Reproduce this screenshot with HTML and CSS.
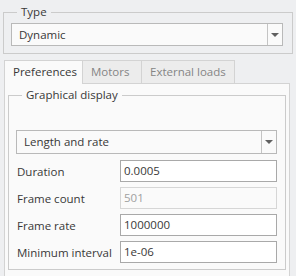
FILE: index.html
```html
<!DOCTYPE html>
<html lang="en">

<head>
    <meta charset="UTF-8">
    <title>Simulation settings</title>
    <link rel="stylesheet" href="styles.css">
</head>

<body>
    <div class="group type-group">
        <span class="legend">Type</span>
        <div class="combo">
            <span class="combo-text">Dynamic</span>
            <span class="combo-btn"><span class="arrow"></span></span>
        </div>
    </div>

    <div class="tabs">
        <div class="tab active">Preferences</div>
        <div class="tab">Motors</div>
        <div class="tab">External loads</div>
    </div>

    <div class="panel">
        <div class="group display-group">
            <span class="legend">Graphical display</span>
            <div class="combo">
                <span class="combo-text">Length and rate</span>
                <span class="combo-btn"><span class="arrow"></span></span>
            </div>
            <div class="rows">
                <div class="row">
                    <label>Duration</label>
                    <div class="field">0.0005</div>
                </div>
                <div class="row">
                    <label>Frame count</label>
                    <div class="field disabled">501</div>
                </div>
                <div class="row">
                    <label>Frame rate</label>
                    <div class="field">1000000</div>
                </div>
                <div class="row">
                    <label>Minimum interval</label>
                    <div class="field">1e-06</div>
                </div>
            </div>
        </div>
    </div>
</body>

</html>
```

FILE: styles.css
```css
* {
    margin: 0;
    padding: 0;
    box-sizing: border-box;
    font-family: 'Open Sans', sans-serif;
}

body {
    background-color: #eeeff1;
    color: #383838;
    font-size: 11.5px;
    width: 296px;
    height: 276px;
    overflow: hidden;
}

.group {
    position: relative;
    border: 1px solid #cbcbcb;
}

.legend {
    position: absolute;
    top: -9px;
    padding: 0 4px;
    line-height: 16px;
}

.type-group {
    margin: 12px 3px 0 3px;
    height: 42px;
    padding: 10px 9px 0 7px;
}

.type-group .legend {
    left: 13px;
    background-color: #eeeff1;
}

.combo {
    display: flex;
    height: 23px;
    background-color: #fafafa;
    border: 1px solid #b9b9b9;
}

.display-group .combo {
    height: 24px;
}

.combo-text {
    flex: 1;
    padding-left: 7px;
    line-height: 21px;
}

.combo-btn {
    width: 15px;
    border-left: 1px solid #c4c4c4;
    display: flex;
    align-items: center;
    justify-content: center;
}

.arrow {
    width: 0;
    height: 0;
    border-left: 4px solid transparent;
    border-right: 4px solid transparent;
    border-top: 4px solid #606060;
}

.tabs {
    display: flex;
    margin: 6px 0 0 4px;
    height: 24px;
}

.tab {
    height: 23px;
    padding: 0 8px;
    line-height: 22px;
    color: #858585;
    background-color: #ececec;
    border: 1px solid #d3d3d3;
    border-bottom: none;
    border-left: none;
}

.tab.active {
    height: 24px;
    color: #383838;
    background-color: #fafafa;
    border-left: 1px solid #d3d3d3;
    position: relative;
    z-index: 1;
    width: 79px;
}

.tab:nth-child(2) {
    width: 59px;
}

.tab:nth-child(3) {
    width: 93px;
}

.panel {
    margin: -1px 6px 0 4px;
    height: 200px;
    background-color: #fafafa;
    border: 1px solid #d3d3d3;
    padding: 11px 3px 0 3px;
}

.display-group {
    height: 175px;
    padding: 34px 8px 0 7px;
}

.display-group .legend {
    left: 13px;
    background-color: #fafafa;
}

.rows {
    display: flex;
    flex-direction: column;
    gap: 5px;
    margin-top: 6px;
}

.row {
    display: flex;
    align-items: center;
    height: 22px;
}

.row label {
    width: 104px;
    padding-left: 1px;
}

.field {
    flex: 1;
    height: 22px;
    line-height: 20px;
    padding-left: 3px;
    background-color: #ffffff;
    border: 1px solid #a9a9a9;
}

.field.disabled {
    color: #a0a0a0;
    background-color: #fafafa;
    border-color: #d6d6d6;
}
```
